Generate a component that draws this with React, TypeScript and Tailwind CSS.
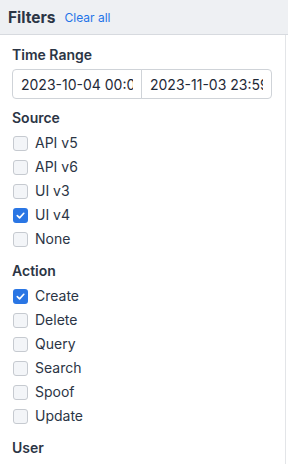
import React, { useState } from "react";

const font = { fontFamily: "Inter, 'Noto Sans', sans-serif" };

function Check({ checked }: { checked: boolean }) {
  return checked ? (
    <span className="flex h-[15px] w-[15px] shrink-0 items-center justify-center rounded-[3px] bg-[#2a76e4]">
      <svg width="11" height="11" viewBox="0 0 12 12" fill="none">
        <path d="M2.5 6.2 L5 8.6 L9.6 3.6" stroke="white" strokeWidth="1.8" strokeLinecap="round" strokeLinejoin="round" />
      </svg>
    </span>
  ) : (
    <span className="h-[15px] w-[15px] shrink-0 rounded-[3px] border border-[#c6cad0] bg-[#f3f5f8]" />
  );
}

function Group({ title, items, checked }: { title: string; items: string[]; checked: string[] }) {
  return (
    <div className="mt-[10px]">
      <div className="h-[20px] text-[14px] font-semibold leading-[20px] text-[#2b3545]">{title}</div>
      <div className="mt-[3px] flex flex-col">
        {items.map((it) => (
          <label key={it} className="flex h-[24px] items-center gap-[7px] pl-px">
            <Check checked={checked.includes(it)} />
            <span className="text-[14px] leading-[20px] text-[#2b3545]">{it}</span>
          </label>
        ))}
      </div>
    </div>
  );
}

export default function App() {
  useState(0);
  return (
    <div className="h-[464px] w-[288px] overflow-hidden bg-white" style={font}>
      <div className="flex h-[35px] items-center gap-[9px] border-b border-[#d7dadf] bg-[#eef0f3] px-[8px] pt-px">
        <span className="text-[15.5px] font-bold text-[#2b3545]">Filters</span>
        <span className="text-[12px] text-[#1f74e8]">Clear all</span>
      </div>
      <div className="h-[429px] w-[286px] border-r border-[#e3e5e8] pl-[12px] pr-[13px] pt-[10px]">
        <div className="h-[20px] text-[14px] font-semibold leading-[20px] text-[#2b3545]">Time Range</div>
        <div className="mt-[4px] flex h-[30px] w-[260px]">
          <div className="flex w-[130px] items-center rounded-l-[4px] border border-[#cfd3d8] px-[8px]">
            <div className="w-full overflow-hidden text-[14px] whitespace-nowrap text-[#1f2937]">2023-10-04 00:00:00</div>
          </div>
          <div className="-ml-px flex w-[131px] items-center rounded-r-[4px] border border-[#cfd3d8] px-[8px]">
            <div className="w-full overflow-hidden text-[14px] whitespace-nowrap text-[#1f2937]">2023-11-03 23:59:59</div>
          </div>
        </div>
        <div className="-mt-px">
          <Group title="Source" items={["API v5", "API v6", "UI v3", "UI v4", "None"]} checked={["UI v4"]} />
        </div>
        <Group title="Action" items={["Create", "Delete", "Query", "Search", "Spoof", "Update"]} checked={["Create"]} />
        <div className="mt-[10px] h-[20px] text-[14px] font-semibold leading-[20px] text-[#2b3545]">User</div>
      </div>
    </div>
  );
}
